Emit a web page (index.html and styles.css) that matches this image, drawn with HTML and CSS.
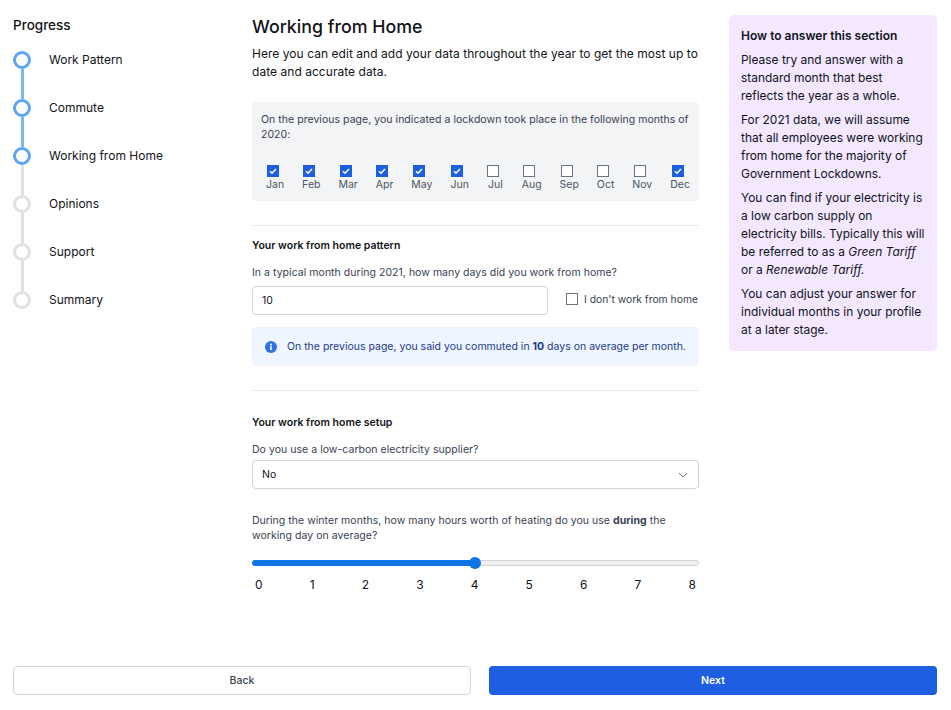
FILE: index.html
```html
<!DOCTYPE html>
<html lang="en">
<head>
    <meta charset="UTF-8">
    <meta name="viewport" content="width=device-width, initial-scale=1.0">
    <title>Working from Home</title>
    <link rel="stylesheet" href="styles.css">
</head>
<body>
    <div class="layout">
        <nav class="progress">
            <div class="progress-title">Progress</div>
            <div class="step done"><div class="marker"><span class="dot"></span><span class="line"></span></div><span>Work Pattern</span></div>
            <div class="step done"><div class="marker"><span class="dot"></span><span class="line"></span></div><span>Commute</span></div>
            <div class="step current"><div class="marker"><span class="dot"></span><span class="line"></span></div><span>Working from Home</span></div>
            <div class="step"><div class="marker"><span class="dot"></span><span class="line"></span></div><span>Opinions</span></div>
            <div class="step"><div class="marker"><span class="dot"></span><span class="line"></span></div><span>Support</span></div>
            <div class="step last"><div class="marker"><span class="dot"></span></div><span>Summary</span></div>
        </nav>

        <main class="content">
            <h1>Working from Home</h1>
            <p class="intro">Here you can edit and add your data throughout the year to get the most up to date and accurate data.</p>

            <div class="lockdown">
                <p>On the previous page, you indicated a lockdown took place in the following months of 2020:</p>
                <div class="months">
                    <label class="month"><span class="box checked"><svg viewBox="0 0 12 12"><path d="M3 6.3 5 8.2 9 4"/></svg></span>Jan</label>
                    <label class="month"><span class="box checked"><svg viewBox="0 0 12 12"><path d="M3 6.3 5 8.2 9 4"/></svg></span>Feb</label>
                    <label class="month"><span class="box checked"><svg viewBox="0 0 12 12"><path d="M3 6.3 5 8.2 9 4"/></svg></span>Mar</label>
                    <label class="month"><span class="box checked"><svg viewBox="0 0 12 12"><path d="M3 6.3 5 8.2 9 4"/></svg></span>Apr</label>
                    <label class="month"><span class="box checked"><svg viewBox="0 0 12 12"><path d="M3 6.3 5 8.2 9 4"/></svg></span>May</label>
                    <label class="month"><span class="box checked"><svg viewBox="0 0 12 12"><path d="M3 6.3 5 8.2 9 4"/></svg></span>Jun</label>
                    <label class="month"><span class="box"></span>Jul</label>
                    <label class="month"><span class="box"></span>Aug</label>
                    <label class="month"><span class="box"></span>Sep</label>
                    <label class="month"><span class="box"></span>Oct</label>
                    <label class="month"><span class="box"></span>Nov</label>
                    <label class="month"><span class="box checked"><svg viewBox="0 0 12 12"><path d="M3 6.3 5 8.2 9 4"/></svg></span>Dec</label>
                </div>
            </div>

            <hr>

            <h2>Your work from home pattern</h2>
            <p class="question">In a typical month during 2021, how many days did you work from home?</p>
            <div class="days-row">
                <div class="field days-field">10</div>
                <label class="no-wfh"><span class="box"></span>I don't work from home</label>
            </div>
            <div class="info">
                <svg class="info-icon" viewBox="0 0 12 12"><circle cx="6" cy="6" r="6" fill="#2f74e0"/><rect x="5.2" y="5.2" width="1.6" height="3.8" fill="#fff"/><circle cx="6" cy="3.5" r="1" fill="#fff"/></svg>
                <span>On the previous page, you said you commuted in <b>10</b> days on average per month.</span>
            </div>

            <hr class="second">

            <h2>Your work from home setup</h2>
            <p class="question">Do you use a low-carbon electricity supplier?</p>
            <div class="field select-field">
                <span>No</span>
                <svg class="chevron" viewBox="0 0 10 6"><path d="M1 1 5 5 9 1"/></svg>
            </div>
            <p class="question heating">During the winter months, how many hours worth of heating do you use <b>during</b> the working day on average?</p>
            <div class="slider">
                <div class="track"><div class="fill"></div><span class="thumb"></span></div>
            </div>
            <div class="ticks">
                <span>0</span><span>1</span><span>2</span><span>3</span><span>4</span><span>5</span><span>6</span><span>7</span><span>8</span>
            </div>
        </main>

        <aside class="help">
            <h3>How to answer this section</h3>
            <p>Please try and answer with a standard month that best reflects the year as a whole.</p>
            <p>For 2021 data, we will assume that all employees were working from home for the majority of Government Lockdowns.</p>
            <p>You can find if your electricity is a low carbon supply on electricity bills. Typically this will be referred to as a <i>Green Tariff</i> or a <i>Renewable Tariff.</i></p>
            <p>You can adjust your answer for individual months in your profile at a later stage.</p>
        </aside>
    </div>

    <footer class="actions">
        <button class="back">Back</button>
        <button class="next">Next</button>
    </footer>
</body>
</html>
```

FILE: styles.css
```css
* {
    box-sizing: border-box;
}
body {
    margin: 0;
    height: 710px;
    padding: 15px 14px 15px 13px;
    display: flex;
    flex-direction: column;
    justify-content: space-between;
    font-family: Inter, Arial, sans-serif;
    color: #111318;
    background-color: #fff;
    overflow: hidden;
}
p {
    margin: 0;
}
.layout {
    display: flex;
    align-items: flex-start;
}

/* left progress list */
.progress {
    width: 239px;
    flex: none;
    padding-top: 2px;
}
.progress-title {
    font-size: 13.5px;
    line-height: 17px;
    font-weight: 500;
    margin-bottom: 17px;
}
.step {
    display: flex;
    height: 48px;
    font-size: 12px;
    line-height: 18px;
    gap: 18px;
}
.marker {
    width: 18px;
    display: flex;
    flex-direction: column;
    align-items: center;
}
.dot {
    width: 18px;
    height: 18px;
    flex: none;
    border: 3px solid #e0e1e6;
    border-radius: 50%;
    background-color: #fff;
}
.line {
    width: 3px;
    flex: 1;
    background-color: #e0e1e6;
}
.done .dot, .current .dot {
    border-color: #60a5ee;
}
.done .line {
    background-color: #7fb6f1;
}

/* middle column */
.content {
    width: 447px;
    flex: none;
}
h1 {
    margin: 0;
    font-size: 17.8px;
    line-height: 24px;
    font-weight: 500;
}
.intro {
    margin-top: 6px;
    font-size: 12px;
    line-height: 18px;
    letter-spacing: 0.0035em;
}
.lockdown {
    margin-top: 21px;
    height: 99px;
    padding: 10px 9px 0;
    background-color: #f3f4f6;
    border-radius: 4px;
    font-size: 10.5px;
    line-height: 15px;
    letter-spacing: 0.0035em;
    color: #374151;
}
.months {
    margin-top: 23px;
    padding: 0 0 0 5px;
    display: flex;
    justify-content: space-between;
}
.month {
    display: flex;
    flex-direction: column;
    align-items: center;
    line-height: 14px;
    color: #4b5563;
}
.box {
    width: 12px;
    height: 12px;
    flex: none;
    display: block;
    border: 1px solid #6b7280;
    background-color: #fff;
}
.month .box {
    margin: 0 5px 1px 0;
}
.box.checked {
    border: none;
    background-color: #1d5fdc;
}
.box svg {
    display: block;
    width: 12px;
    height: 12px;
    fill: none;
    stroke: #fff;
    stroke-width: 1.5;
}
hr {
    margin: 24px 0 0;
    border: none;
    border-top: 1px solid #e5e7eb;
}
h2 {
    margin: 13px 0 0;
    font-size: 10.5px;
    line-height: 14px;
    font-weight: 600;
}
.question {
    margin-top: 12px;
    font-size: 10.5px;
    line-height: 15px;
    letter-spacing: 0.0035em;
    color: #374151;
}
.days-row {
    margin-top: 6px;
    display: flex;
    align-items: center;
    justify-content: space-between;
}
.field {
    height: 29px;
    padding: 0 9px;
    display: flex;
    align-items: center;
    border: 1px solid #d1d5db;
    border-radius: 4px;
    font-size: 10.5px;
    background-color: #fff;
}
.days-field {
    width: 296px;
}
.no-wfh {
    display: flex;
    align-items: center;
    gap: 6px;
    margin: -4px 1px 0 0;
    font-size: 10.35px;
    color: #374151;
}
.info {
    margin-top: 12px;
    height: 39px;
    padding: 0 13px;
    display: flex;
    align-items: center;
    gap: 10px;
    background-color: #eff6ff;
    border-radius: 4px;
    font-size: 10.5px;
    color: #1e3a8a;
}
.info-icon {
    width: 12px;
    height: 12px;
    flex: none;
}
hr.second {
    margin-top: 24px;
}
hr.second + h2 {
    margin-top: 25px;
}
.select-field {
    width: 100%;
    margin-top: 3px;
    justify-content: space-between;
}
.chevron {
    width: 10px;
    height: 6px;
    margin-right: 1px;
    fill: none;
    stroke: #6b7280;
    stroke-width: 1;
}
.question.heating {
    margin-top: 24px;
}
.slider {
    margin-top: 14px;
    height: 12px;
    display: flex;
    align-items: center;
}
.track {
    width: 100%;
    height: 6px;
    display: flex;
    align-items: center;
    border: 1px solid #d4d4d8;
    border-radius: 3px;
    background-color: #efefef;
}
.fill {
    width: 50%;
    height: 6px;
    margin-left: -1px;
    border-radius: 3px 0 0 3px;
    background-color: #0f74e6;
}
.thumb {
    width: 12px;
    height: 12px;
    flex: none;
    margin-left: -6px;
    border-radius: 50%;
    background-color: #0f74e6;
}
.ticks {
    margin-top: 8px;
    padding: 0 3px;
    display: flex;
    justify-content: space-between;
    font-size: 12px;
    line-height: 15px;
}

/* right help box */
.help {
    width: 208px;
    flex: none;
    margin-left: 30px;
    padding: 12px 10px 12px 12px;
    background-color: #f3e8ff;
    border-radius: 5px;
    font-size: 11.95px;
    line-height: 18px;
}
.help h3 {
    margin: 0 0 6px;
    font-size: 12px;
    line-height: 18px;
    font-weight: 600;
}
.help p {
    margin-top: 6px;
}

/* bottom buttons */
.actions {
    display: flex;
    gap: 18px;
}
button {
    height: 29px;
    border-radius: 4px;
    font-family: inherit;
    font-size: 10.5px;
    cursor: pointer;
}
.back {
    width: 458px;
    flex: none;
    border: 1px solid #d1d5db;
    background-color: #fff;
    color: #374151;
    font-weight: 500;
}
.next {
    flex: 1;
    border: none;
    background-color: #1d5fe0;
    color: #fff;
    font-weight: 600;
}
```
